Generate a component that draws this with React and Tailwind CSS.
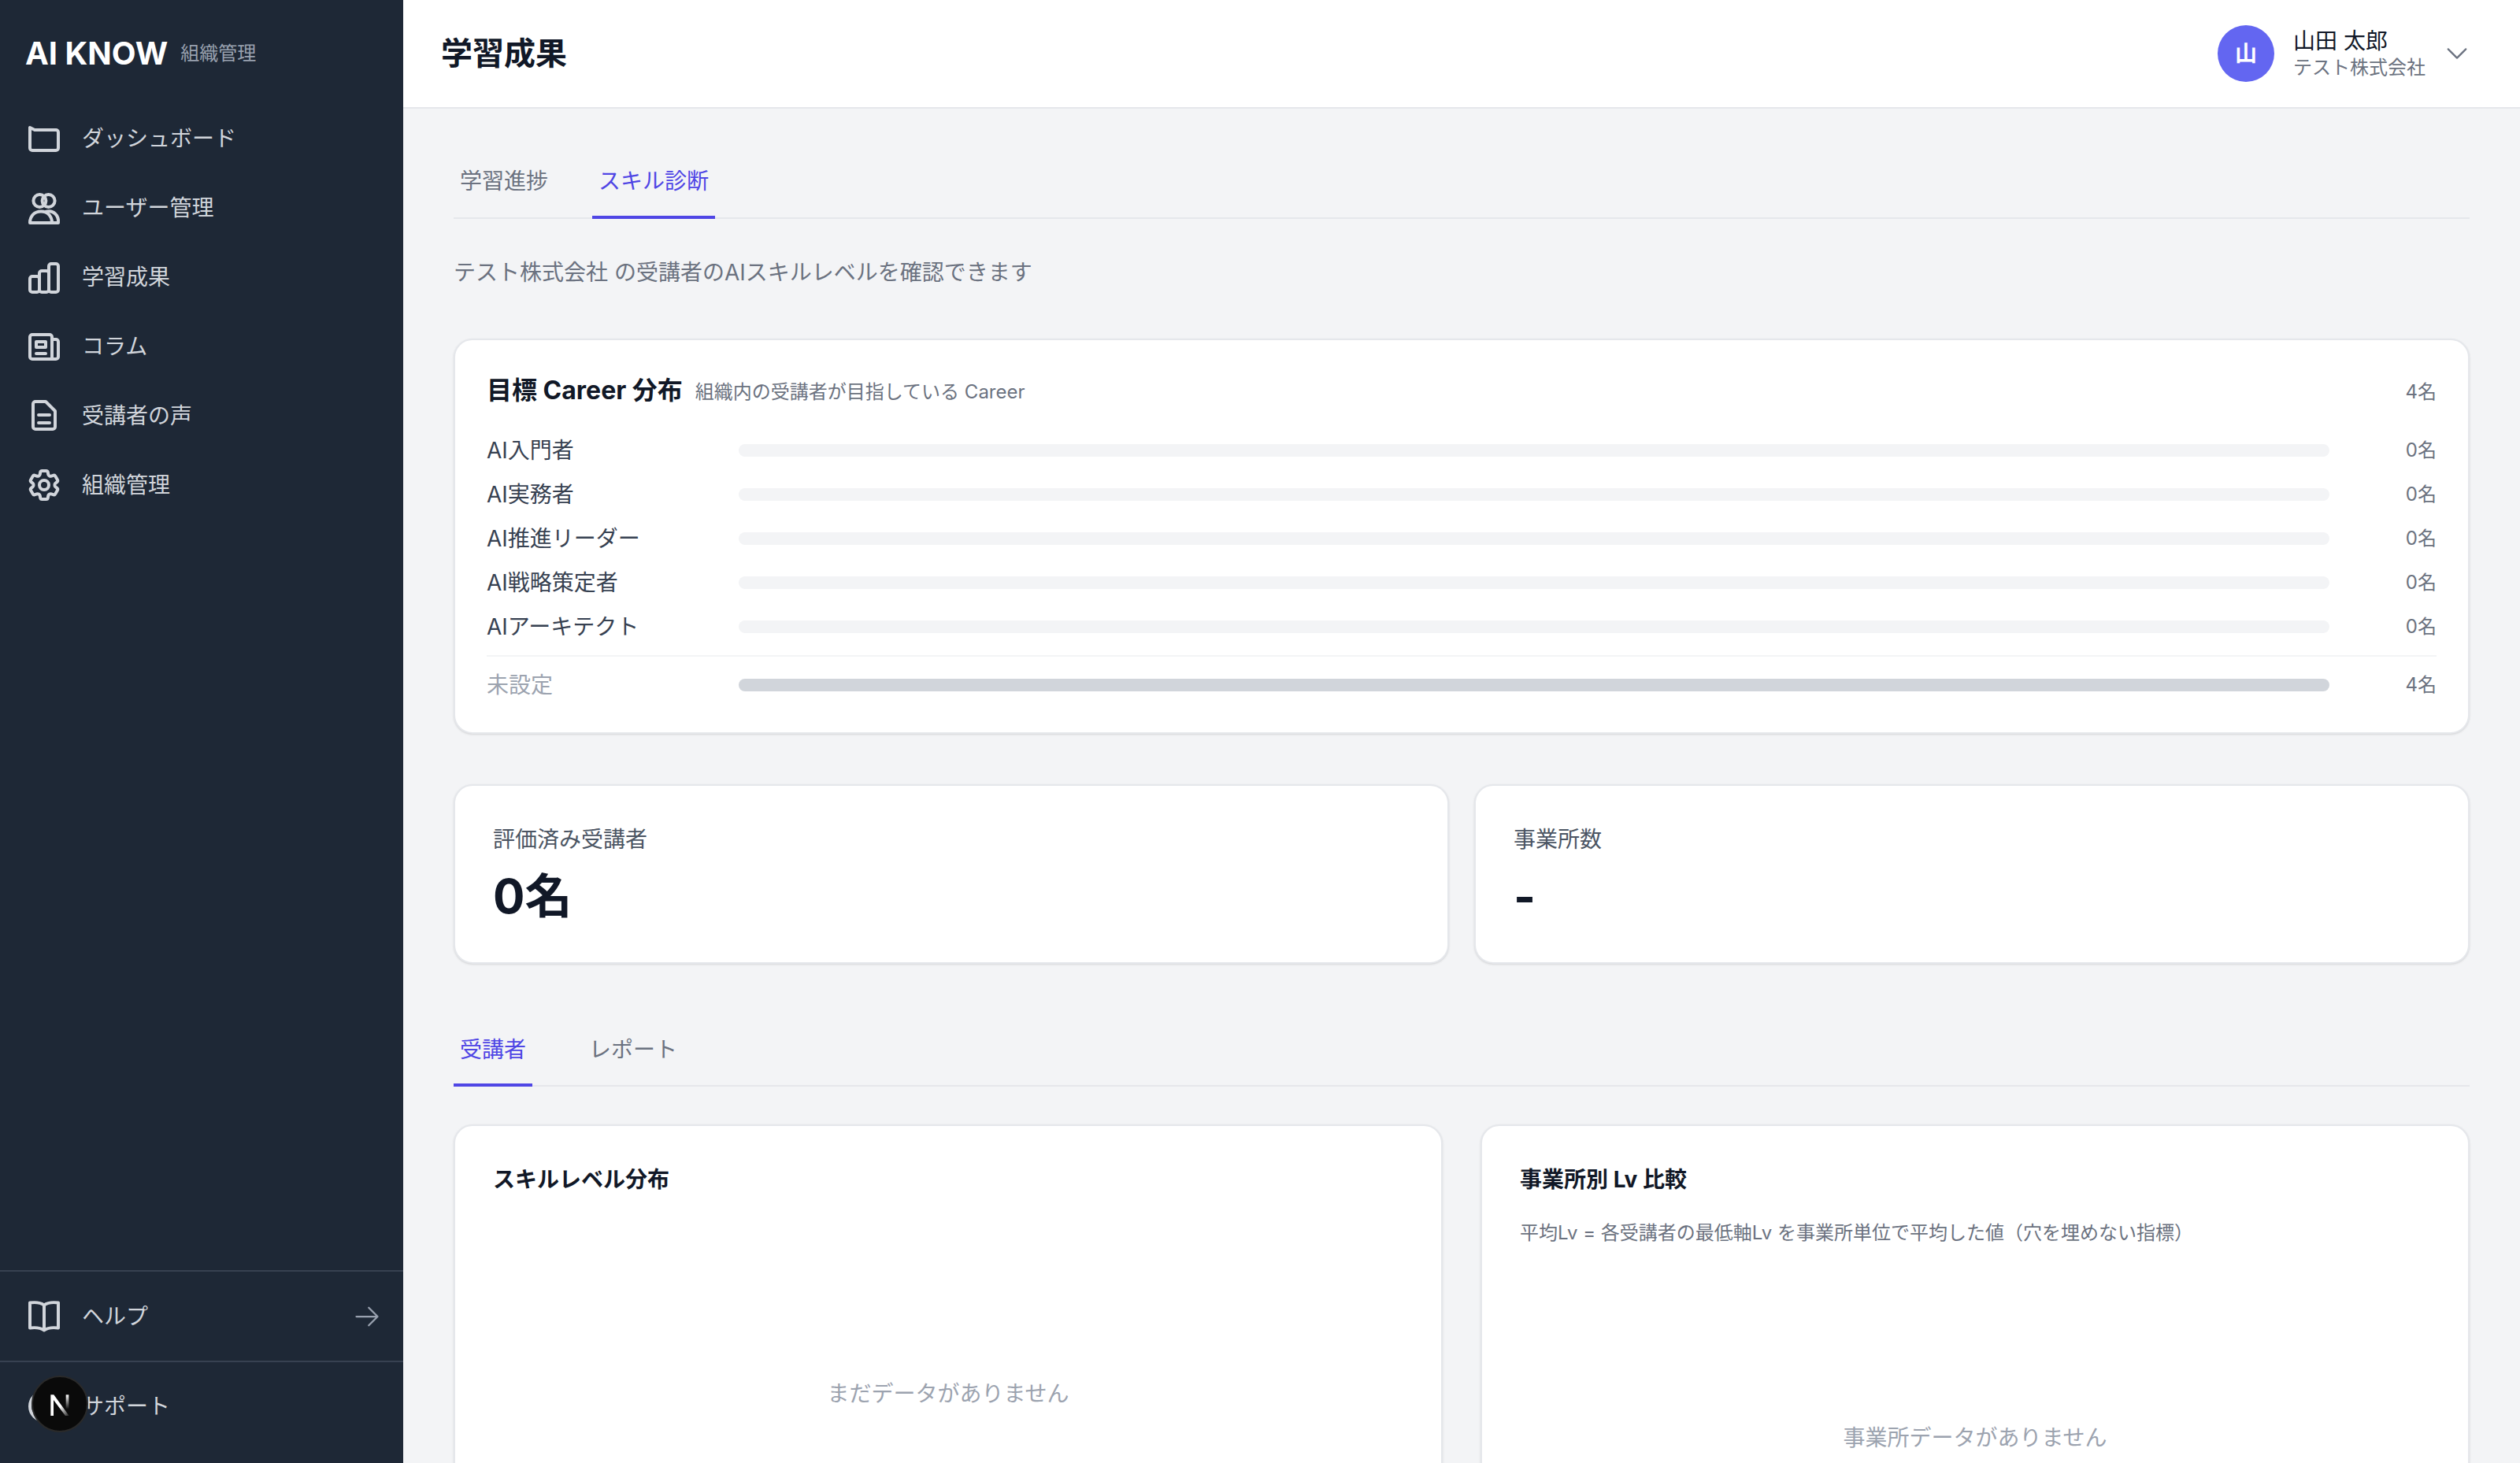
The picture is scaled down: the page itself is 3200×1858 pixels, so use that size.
import React from 'react';
import {
  HiOutlineArrowRight,
  HiOutlineChevronDown,
  HiOutlineCog6Tooth,
  HiOutlineQuestionMarkCircle,
} from 'react-icons/hi2';

const Line = ({ className, children }) => (
  <svg viewBox="0 0 24 24" fill="none" stroke="currentColor" strokeWidth="2" strokeLinecap="round" strokeLinejoin="round" className={className}>
    {children}
  </svg>
);

const FolderIcon = ({ className }) => (
  <Line className={className}>
    <path d="M3 5v13a1.5 1.5 0 0 0 1.5 1.5h15A1.5 1.5 0 0 0 21 18V8a1.5 1.5 0 0 0-1.5-1.5H6L3 5z" />
  </Line>
);

const UsersIcon = ({ className }) => (
  <Line className={className}>
    <circle cx="9.2" cy="7.5" r="4" />
    <circle cx="14.8" cy="7.5" r="4" />
    <path d="M3 21.5C3 17 6 14.2 10 14.2s7 2.8 7 7.3H3z" />
    <path d="M13 14.5c5-1.5 8.5 2.5 8 7h-4" />
  </Line>
);

const ChartIcon = ({ className }) => (
  <Line className={className}>
    <rect x="3" y="11.5" width="6" height="10" rx="1.5" />
    <rect x="9" y="8" width="6" height="13.5" rx="1.5" />
    <rect x="15" y="3.5" width="6" height="18" rx="1.5" />
  </Line>
);

const NewsIcon = ({ className }) => (
  <Line className={className}>
    <path d="M17 7.5h2.5A1.5 1.5 0 0 1 21 9v9.5a1.5 1.5 0 0 1-1.5 1.5h-15A1.5 1.5 0 0 1 3 18.5V6a1.5 1.5 0 0 1 1.5-1.5h11A1.5 1.5 0 0 1 17 6v14" />
    <rect x="7" y="9" width="6" height="3.5" />
    <path d="M7 16.5h6" />
  </Line>
);

const DocIcon = ({ className }) => (
  <Line className={className}>
    <path d="M6.5 3H13l6 6v10a1.5 1.5 0 0 1-1.5 1.5h-11A1.5 1.5 0 0 1 5 19V4.5A1.5 1.5 0 0 1 6.5 3z" />
    <path d="M8.5 11.5h7M8.5 16.5h7" />
  </Line>
);

const GearIcon = ({ className }) => <HiOutlineCog6Tooth className={className} strokeWidth={2} />;

const BookIcon = ({ className }) => (
  <Line className={className}>
    <path d="M12 4.75C10 3.25 7 2.75 3 3.25v16c4-.5 7 0 9 1.5 2-1.5 5-2 9-1.5v-16c-4-.5-7 0-9 1.5zM12 4.75v16" />
  </Line>
);

const navItems = [
  { label: 'ダッシュボード', icon: FolderIcon },
  { label: 'ユーザー管理', icon: UsersIcon },
  { label: '学習成果', icon: ChartIcon },
  { label: 'コラム', icon: NewsIcon },
  { label: '受講者の声', icon: DocIcon },
  { label: '組織管理', icon: GearIcon },
];

const careers = ['AI入門者', 'AI実務者', 'AI推進リーダー', 'AI戦略策定者', 'AIアーキテクト'];

const Sidebar = () => (
  <aside className="w-[512px] h-full shrink-0 bg-[#1e2836] flex flex-col">
    <div className="h-[132px] pl-8 pt-1 flex items-center gap-4">
      <span className="text-[40px] leading-none font-bold text-white">AI KNOW</span>
      <span className="text-2xl text-gray-400">組織管理</span>
    </div>
    <nav className="flex flex-col">
      {navItems.map((item) => (
        <div key={item.label} className="h-[88px] px-8 flex items-center gap-6 text-[28px] text-[#d1d5db]">
          <item.icon className="w-12 h-12" />
          <span>{item.label}</span>
        </div>
      ))}
    </nav>
    <div className="mt-auto">
      <div className="h-[115px] px-8 border-t-2 border-[#374151] flex items-center gap-6 text-[28px] text-[#d1d5db]">
        <BookIcon className="w-12 h-12" />
        <span>ヘルプ</span>
        <HiOutlineArrowRight className="w-9 h-9 ml-auto -mr-1 text-gray-400" />
      </div>
      <div className="relative h-[130px] pb-4 px-8 border-t-2 border-[#374151] flex items-center gap-6 text-[28px] text-[#d1d5db]">
        <HiOutlineQuestionMarkCircle className="w-12 h-12" strokeWidth={2} />
        <span>サポート</span>
        <div className="absolute left-[40px] top-[17px] w-[72px] h-[72px] rounded-full bg-[#0a0a0a] border-2 border-[#2a2a2a] flex items-center justify-center">
          <svg viewBox="0 0 24 24" className="w-10 h-10">
            <defs>
              <linearGradient id="nFade" x1="0" y1="0" x2="1" y2="1">
                <stop offset="0.55" stopColor="#fff" />
                <stop offset="1" stopColor="#fff" stopOpacity="0.1" />
              </linearGradient>
              <linearGradient id="nBar" x1="0" y1="0" x2="0" y2="1">
                <stop offset="0" stopColor="#fff" />
                <stop offset="1" stopColor="#fff" stopOpacity="0" />
              </linearGradient>
            </defs>
            <path d="M5 5h2.4L19 21h-2.8L7.2 9v12H5z" fill="url(#nFade)" />
            <rect x="16.6" y="5" width="2.2" height="11" fill="url(#nBar)" />
          </svg>
        </div>
      </div>
    </div>
  </aside>
);

const Header = () => (
  <header className="h-[138px] shrink-0 bg-white border-b-2 border-[#e5e7eb] pl-12 pr-16 flex items-center justify-between">
    <h1 className="text-[40px] font-bold text-[#111827]">学習成果</h1>
    <div className="flex items-center">
      <div className="w-[72px] h-[72px] rounded-full bg-[#6366f1] flex items-center justify-center text-[28px] font-semibold text-white">山</div>
      <div className="ml-6 flex flex-col">
        <span className="text-[28px] leading-9 text-[#111827]">山田 太郎</span>
        <span className="text-2xl leading-8 text-[#6b7280]">テスト株式会社</span>
      </div>
      <HiOutlineChevronDown className="w-9 h-9 ml-[22px] -mr-0.5 text-[#6b7280]" />
    </div>
  </header>
);

const Tab = ({ label, active, className = '' }) => (
  <div
    className={`px-2 -mb-0.5 flex items-center border-b-4 text-[28px] ${className} ${
      active ? 'border-[#4f46e5] text-[#4f46e5]' : 'border-transparent text-[#6b7280]'
    }`}
  >
    {label}
  </div>
);

const CareerRow = ({ label, count, fill }) => (
  <div className="h-10 flex items-center text-[28px] leading-10">
    <span className={`w-80 shrink-0 ${fill ? 'text-[#9ca3af]' : 'text-[#374151]'}`}>{label}</span>
    <div className={`flex-1 h-4 rounded-full ${fill ? 'bg-[#d1d5db]' : 'bg-[#f3f4f6]'}`} />
    <span className="w-24 ml-10 shrink-0 text-right text-2xl text-[#6b7280]">{count}</span>
  </div>
);

const Card = ({ className = '', children }) => (
  <div className={`bg-white rounded-3xl border-2 border-[#e5e7eb] shadow-sm ${className}`}>{children}</div>
);

const StatCard = ({ label, value }) => (
  <Card className="h-[228px] px-12 pt-12">
    <div className="text-[28px] leading-10 text-[#4b5563]">{label}</div>
    <div className="mt-[14px] text-[60px] leading-[76px] font-bold text-[#111827]">{value}</div>
  </Card>
);

export default function App() {
  return (
    <div className='w-[3200px] h-[1858px] flex overflow-hidden bg-[#f3f4f6] font-[Inter,"Noto_Sans_CJK_JP",sans-serif]'>
      <Sidebar />
      <div className="flex-1 flex flex-col min-w-0">
        <Header />
        <main className="flex-1 px-16 overflow-hidden">
          <div className="flex gap-12 pt-12 border-b-2 border-[#e5e7eb]">
            <Tab label="学習進捗" className="h-[92px]" />
            <Tab label="スキル診断" active className="h-[92px]" />
          </div>

          <p className="mt-12 text-[28px] leading-10 text-[#6b7280]">テスト株式会社 の受講者のAIスキルレベルを確認できます</p>

          <Card className="mt-16 h-[502px] px-10 pt-10">
            <div className="flex items-center h-12 mb-8">
              <h2 className="text-[32px] font-bold text-[#111827]">目標 Career 分布</h2>
              <span className="ml-4 mt-1 text-2xl text-[#6b7280]">組織内の受講者が目指している Career</span>
              <span className="ml-auto mt-1 text-2xl text-[#6b7280]">4名</span>
            </div>
            <div className="flex flex-col gap-4">
              {careers.map((c) => (
                <CareerRow key={c} label={c} count="0名" />
              ))}
            </div>
            <div className="mt-4 pt-4 border-t-2 border-[#f3f4f6]">
              <CareerRow label="未設定" count="4名" fill />
            </div>
          </Card>

          <div className="mt-16 grid grid-cols-2 gap-8">
            <StatCard label="評価済み受講者" value="0名" />
            <StatCard label="事業所数" value="-" />
          </div>

          <div className="mt-[66px] flex gap-16 border-b-2 border-[#e5e7eb]">
            <Tab label="受講者" active className="h-[90px]" />
            <Tab label="レポート" className="h-[90px]" />
          </div>

          <div className="mt-12 grid grid-cols-2 gap-12">
            <Card className="h-[600px] px-12 pt-12">
              <h3 className="text-[28px] leading-10 font-bold text-[#111827]">スキルレベル分布</h3>
              <p className="mt-[232px] text-center text-[28px] leading-10 text-[#9ca3af]">まだデータがありません</p>
            </Card>
            <Card className="h-[600px] px-12 pt-12">
              <h3 className="text-[28px] leading-10 font-bold text-[#111827]">事業所別 Lv 比較</h3>
              <p className="mt-8 text-2xl leading-8 text-[#6b7280]">平均Lv = 各受講者の最低軸Lv を事業所単位で平均した値（穴を埋めない指標）</p>
              <p className="mt-[224px] text-center text-[28px] leading-10 text-[#9ca3af]">事業所データがありません</p>
            </Card>
          </div>
        </main>
      </div>
    </div>
  );
}
